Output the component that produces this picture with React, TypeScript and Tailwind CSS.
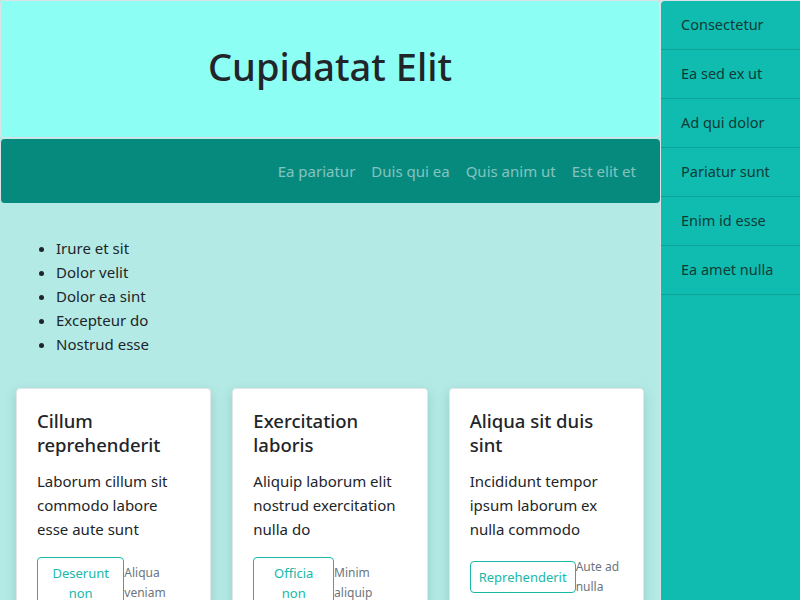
const navLinks = ['Ea pariatur', 'Duis qui ea', 'Quis anim ut', 'Est elit et'];
const listItems = ['Irure et sit', 'Dolor velit', 'Dolor ea sint', 'Excepteur do', 'Nostrud esse'];
const sideItems = ['Consectetur', 'Ea sed ex ut', 'Ad qui dolor', 'Pariatur sunt', 'Enim id esse', 'Ea amet nulla'];

const cards = [
  {
    title: 'Cillum reprehenderit',
    body: 'Laborum cillum sit commodo labore esse aute sunt',
    button: 'Deserunt non',
    note: 'Aliqua veniam',
  },
  {
    title: 'Exercitation laboris',
    body: 'Aliquip laborum elit nostrud exercitation nulla do',
    button: 'Officia non',
    note: 'Minim aliquip',
  },
  {
    title: 'Aliqua sit duis sint',
    body: 'Incididunt tempor ipsum laborum ex nulla commodo',
    button: 'Reprehenderit',
    note: 'Aute ad nulla',
  },
];

export default function App() {
  return (
    <div
      className="w-[800px] h-[600px] overflow-hidden flex bg-[#dee2e6] text-[#212529]"
      style={{ fontFamily: '"Noto Sans", "Open Sans", sans-serif' }}
    >
      {/* ── Main column ───────────────────────────── */}
      <div className="w-[660px] shrink-0 flex flex-col bg-[#b4eae5]">
        <header className="h-[138px] shrink-0 flex items-center justify-center pb-1 bg-[#8cfef3] border border-[#dee2e6] rounded">
          <h1 className="text-[38px] font-medium leading-tight">Cupidatat Elit</h1>
        </header>

        <nav className="mt-px h-[64px] shrink-0 flex items-center justify-end px-4 bg-[#078a7e] rounded border-l border-[#dee2e6]">
          {navLinks.map((l) => (
            <span key={l} className="px-2 text-[15px] text-white/50">
              {l}
            </span>
          ))}
        </nav>

        <div className="flex-1 px-4 pt-[33px] bg-[#b4eae5]">
          <ul className="list-disc pl-10 text-[15px] leading-6">
            {listItems.map((i) => (
              <li key={i}>{i}</li>
            ))}
          </ul>

          {/* Cards */}
          <div className="mt-[32px] grid grid-cols-3 gap-[21px]">
            {cards.map((c) => (
              <div
                key={c.title}
                className="bg-white rounded border border-[#e3e6e8] shadow-[0_4px_12px_rgba(0,80,75,0.18)] p-5"
              >
                <h5 className="text-[18.5px] font-medium leading-6">{c.title}</h5>
                <p className="mt-3 text-[15px] leading-6">{c.body}</p>
                <div className="mt-4 flex items-center">
                  <button className="border border-[#17b8a8] text-[#17b8a8] rounded px-2 py-[5px] text-[13px] leading-5">
                    {c.button}
                  </button>
                  <span className="text-[12px] leading-5 text-[#6c757d]">{c.note}</span>
                </div>
              </div>
            ))}
          </div>
        </div>
      </div>

      {/* ── Sidebar ───────────────────────────────── */}
      <aside className="flex-1 ml-px mt-px bg-[#10bcb0] rounded-tl">
        {sideItems.map((s) => (
          <div
            key={s}
            className="h-[49px] flex items-center px-5 border-b border-[#0ca396] text-[14.5px] text-[#0f3b37]"
          >
            {s}
          </div>
        ))}
      </aside>
    </div>
  );
}
